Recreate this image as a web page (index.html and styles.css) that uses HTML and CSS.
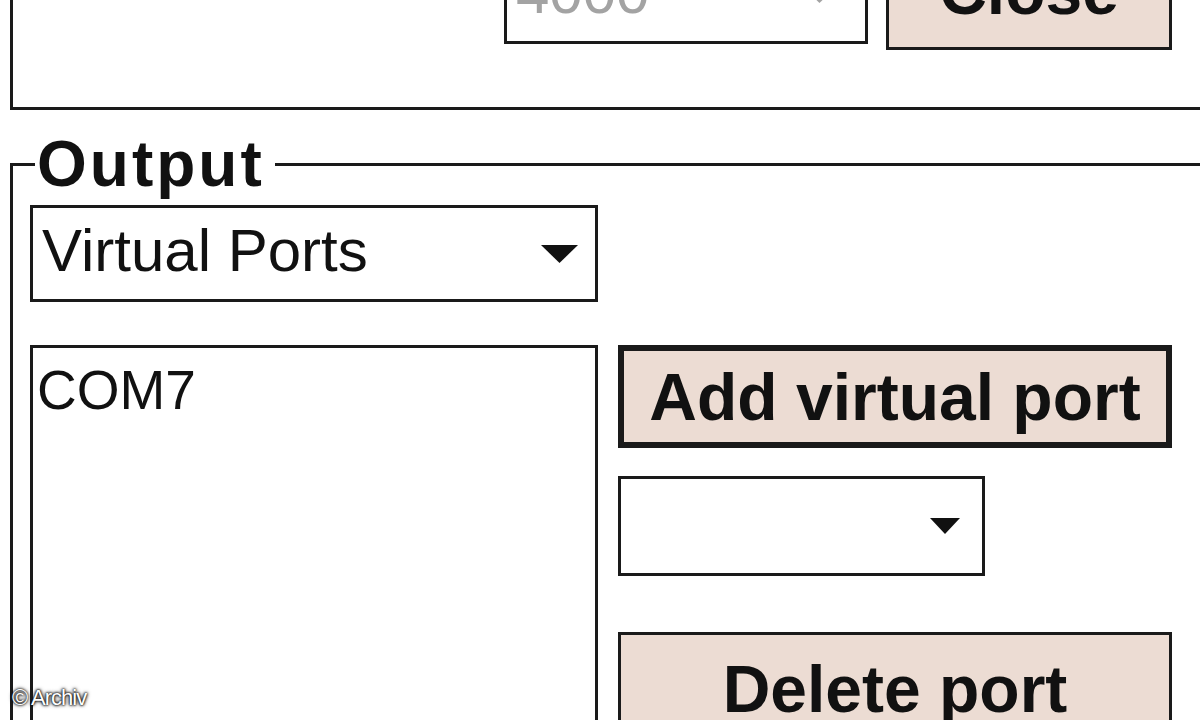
FILE: index.html
```html
<!DOCTYPE html>
<html lang="en">
<head>
    <meta charset="UTF-8">
    <meta name="viewport" content="width=device-width, initial-scale=1.0">
    <title>Output Ports</title>
    <link rel="stylesheet" href="styles.css">
</head>
<body>
    <div class="screen">
        <div class="top-group">
            <div class="top-row">
                <div class="combo combo-top disabled">
                    <span class="combo-text">4000</span>
                    <svg class="arrow" viewBox="0 0 37 18"><polygon points="0,0 37,0 18.5,18"/></svg>
                </div>
                <button class="btn btn-close">Close</button>
            </div>
        </div>

        <fieldset class="output">
            <legend>Output</legend>
            <div class="combo combo-wide">
                <span class="combo-text">Virtual Ports</span>
                <svg class="arrow" viewBox="0 0 37 18"><polygon points="0,0 37,0 18.5,18"/></svg>
            </div>

            <div class="port-row">
                <div class="listbox">
                    <div class="list-item">COM7</div>
                </div>
                <div class="port-actions">
                    <button class="btn btn-add">Add virtual port</button>
                    <div class="combo combo-small">
                        <span class="combo-text"></span>
                        <svg class="arrow arrow-small" viewBox="0 0 30 16"><polygon points="0,0 30,0 15,16"/></svg>
                    </div>
                    <button class="btn btn-delete">Delete port</button>
                </div>
            </div>
        </fieldset>

        <div class="watermark">© Archiv</div>
    </div>
</body>
</html>
```

FILE: styles.css
```css
body {
    margin: 0;
    background: #fff;
    color: #111;
    font-family: "Liberation Sans", Arial, sans-serif;
    overflow: hidden;
}

.screen {
    position: relative;
    width: 1200px;
    height: 720px;
    overflow: hidden;
}

/* upper group box, mostly scrolled out of view */
.top-group {
    box-sizing: border-box;
    height: 170px;
    margin: -60px 0 0 10px;
    border-left: 3px solid #1a1a1a;
    border-bottom: 3px solid #1a1a1a;
}

.top-row {
    display: flex;
    justify-content: flex-end;
    align-items: flex-start;
    gap: 18px;
    padding: 4px 28px 0 0;
}

/* combo boxes */
.combo {
    box-sizing: border-box;
    display: flex;
    align-items: center;
    justify-content: space-between;
    border: 3px solid #1a1a1a;
    background: #fff;
    padding: 0 17px 0 9px;
}

.combo-text {
    font-size: 60px;
    line-height: 60px;
    margin-bottom: 6px;
}

.arrow {
    width: 37px;
    height: 18px;
    fill: #111;
    flex-shrink: 0;
}

.arrow-small {
    width: 30px;
    height: 16px;
}

.combo-top {
    width: 364px;
    height: 100px;
    padding-right: 27px;
}

.combo-top .combo-text {
    margin-bottom: 2px;
}

.disabled .combo-text {
    color: #a3a3a3;
}

.disabled .arrow {
    fill: #a3a3a3;
}

.combo-wide {
    width: 568px;
    height: 97px;
}

.combo-small {
    width: 367px;
    height: 100px;
    margin-top: 28px;
    padding-right: 22px;
}

/* buttons (content is centred vertically, padding nudges it) */
.btn {
    box-sizing: border-box;
    display: block;
    margin: 0;
    border: 3px solid #1a1a1a;
    background: #ecdcd3;
    color: #111;
    font-family: "Liberation Sans", Arial, sans-serif;
    font-weight: bold;
    font-size: 66px;
    line-height: 66px;
    text-align: center;
    padding: 3px 0 0;
}

.btn-close {
    width: 286px;
    height: 101px;
    margin-top: 5px;
    padding: 0 0 18px;
}

.btn-add {
    width: 554px;
    height: 103px;
    border-width: 6px;
    padding-top: 0;
}

.btn-delete {
    width: 554px;
    height: 110px;
    margin-top: 56px;
}

/* output group */
.output {
    margin: 22px 0 0 10px;
    padding: 9px 0 0 17px;
    min-width: 0;
    border: 3px solid #1a1a1a;
    border-right: none;
    border-bottom: none;
}

.output legend {
    margin-left: 5px;
    padding: 0 10px 0 2px;
    font-weight: bold;
    font-size: 64px;
    line-height: 64px;
    letter-spacing: 3px;
}

.port-row {
    display: flex;
    align-items: flex-start;
    gap: 20px;
    margin-top: 43px;
}

.listbox {
    box-sizing: border-box;
    width: 568px;
    height: 420px;
    border: 3px solid #1a1a1a;
    padding: 15px 4px 0;
}

.list-item {
    font-size: 55px;
    line-height: 55px;
}

.port-actions {
    display: flex;
    flex-direction: column;
    align-items: flex-start;
    width: 554px;
}

.watermark {
    position: absolute;
    left: 12px;
    bottom: 9px;
    color: #fff;
    font-size: 22px;
    letter-spacing: -1px;
    text-shadow: 0 0 2px #000, 0 0 3px #000, 0 0 4px #333;
}
```
